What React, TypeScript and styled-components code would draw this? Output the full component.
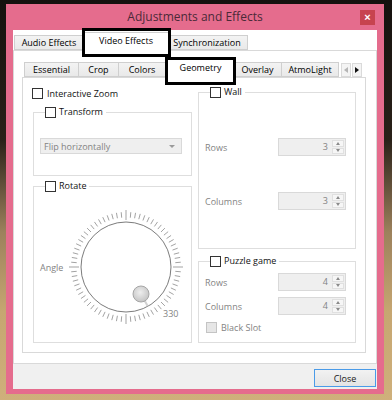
import React from 'react';
import styled, { createGlobalStyle } from 'styled-components';

const uiFont = "'Open Sans', 'Noto Sans', Arial, sans-serif";
const uiSize = '9px';
const disabledText = '#838383';
const lineColor = '#d9d9d9';

const GlobalStyle = createGlobalStyle`
  html, body {
    margin: 0;
    padding: 0;
  }
  body {
    width: 392px;
    height: 400px;
    overflow: hidden;
    background: linear-gradient(180deg, #15110e 0%, #2a2119 35%, #9c815c 58%, #c6a671 78%, #cfb07b 100%);
    font-family: ${uiFont};
  }
`;

const Page = styled.div`
  position: relative;
  width: 392px;
  height: 400px;
  padding: 4px 0 0 6px;
  box-sizing: border-box;
`;

const Window = styled.div`
  width: 378px;
  height: 390px;
  box-sizing: border-box;
  background: #e56c8d;
  padding: 0 7px 5px 7px;
  display: flex;
  flex-direction: column;
`;

const TitleBar = styled.div`
  height: 26px;
  display: grid;
  grid-template-columns: 1fr auto 1fr;
  align-items: center;
`;

const Title = styled.div`
  font-size: 12px;
  color: #4a2a38;
  white-space: nowrap;
  padding-bottom: 2px;
`;

const CloseX = styled.div`
  justify-self: end;
  width: 15px;
  height: 15px;
  margin-right: 2px;
  background: #c7434f;
  color: #fff;
  font-family: 'Liberation Sans', Arial, sans-serif;
  font-size: 11px;
  font-weight: bold;
  line-height: 14px;
  text-align: center;
`;

const Client = styled.div`
  flex: 1;
  background: #fff;
  display: flex;
  flex-direction: column;
`;

const TabBar = styled.div<{ $h: number; $pad: number }>`
  height: ${(p) => p.$h}px;
  padding-left: ${(p) => p.$pad}px;
  display: flex;
  align-items: flex-end;
  position: relative;
  z-index: 1;
`;

const Tab = styled.div<{ $w: number; $active?: boolean }>`
  width: ${(p) => p.$w}px;
  height: ${(p) => (p.$active ? 19 : 15)}px;
  box-sizing: border-box;
  border: 1px solid #cfcfcf;
  border-bottom: ${(p) => (p.$active ? 'none' : '1px solid #cfcfcf')};
  background: ${(p) => (p.$active ? '#fff' : 'linear-gradient(#f3f3f3, #e9e9e9)')};
  margin-bottom: ${(p) => (p.$active ? -1 : 0)}px;
  position: relative;
  z-index: ${(p) => (p.$active ? 2 : 1)};
  display: flex;
  align-items: center;
  justify-content: center;
  padding-bottom: ${(p) => (p.$active ? 3 : 0)}px;
  font-size: ${uiSize};
  color: #000;
  white-space: nowrap;
  & + & {
    margin-left: -1px;
  }
  ${(p) => (p.$active ? '&& { margin-left: -2px; margin-right: -2px; }' : '')}
`;

const ScrollButtons = styled.div`
  display: flex;
  gap: 1px;
  margin-left: 2px;
`;

const ScrollButton = styled.div<{ $dir: 'left' | 'right'; $enabled?: boolean }>`
  width: 10px;
  height: 14px;
  box-sizing: border-box;
  border: 1px solid #dadada;
  background: #f4f4f4;
  display: flex;
  align-items: center;
  justify-content: center;
  &::after {
    content: '';
    width: 0;
    height: 0;
    border-top: 3.5px solid transparent;
    border-bottom: 3.5px solid transparent;
    ${(p) =>
      p.$dir === 'left'
        ? `border-right: 4px solid ${p.$enabled ? '#111' : '#b5b5b5'};`
        : `border-left: 4px solid ${p.$enabled ? '#111' : '#b5b5b5'};`}
  }
`;

const OuterPane = styled.div`
  height: 314px;
  box-sizing: border-box;
  border: 1px solid ${lineColor};
  padding: 8px 10px 10px 8px;
  display: flex;
  flex-direction: column;
`;

const InnerPane = styled.div`
  flex: 1;
  box-sizing: border-box;
  border: 1px solid ${lineColor};
  padding: 8px 9px 9px 9px;
  display: grid;
  grid-template-columns: 160px 159px;
  column-gap: 5px;
`;

const Column = styled.div`
  display: flex;
  flex-direction: column;
`;

const CheckRow = styled.label<{ $indent?: number; $muted?: boolean; $top?: number }>`
  height: 14px;
  display: flex;
  align-items: center;
  gap: 4px;
  margin-left: ${(p) => p.$indent ?? 0}px;
  margin-top: ${(p) => p.$top ?? 0}px;
  font-size: ${uiSize};
  color: ${(p) => (p.$muted ? disabledText : '#111')};
`;

const Check = styled.span<{ $disabled?: boolean }>`
  width: 11px;
  height: 11px;
  box-sizing: border-box;
  border: 1px solid ${(p) => (p.$disabled ? '#c4c4c4' : '#333')};
  background: ${(p) => (p.$disabled ? '#e6e6e6' : '#fff')};
  flex-shrink: 0;
`;

const Group = styled.fieldset<{ $top: number; $pad: string }>`
  margin: ${(p) => p.$top}px 0 0 1px;
  min-width: 0;
  border: 1px solid #dedede;
  padding: ${(p) => p.$pad};
  display: flex;
  flex-direction: column;
`;

const Legend = styled.legend`
  height: 12px;
  margin-left: 5px;
  padding: 0 3px 0 0;
  display: flex;
  align-items: center;
  gap: 3px;
  font-size: ${uiSize};
  color: #111;
  line-height: 12px;
`;

const Combo = styled.div`
  width: 142px;
  height: 16px;
  box-sizing: border-box;
  border: 1px solid ${lineColor};
  background: #efefef;
  display: flex;
  align-items: center;
  justify-content: space-between;
  padding: 0 6px 0 3px;
  font-size: ${uiSize};
  color: ${disabledText};
  &::after {
    content: '';
    border-left: 3px solid transparent;
    border-right: 3px solid transparent;
    border-top: 3px solid #9a9a9a;
  }
`;

const DialRow = styled.div`
  display: flex;
  align-items: center;
`;

const DialLabel = styled.span`
  width: 26px;
  font-size: ${uiSize};
  color: ${disabledText};
`;

const FieldRow = styled.div<{ $gap?: number }>`
  height: 18px;
  display: flex;
  align-items: center;
  justify-content: space-between;
  margin-top: ${(p) => p.$gap ?? 0}px;
  font-size: ${uiSize};
  color: ${disabledText};
`;

const Spin = styled.div`
  width: 68px;
  height: 18px;
  box-sizing: border-box;
  border: 1px solid ${lineColor};
  background: #efefef;
  display: flex;
  align-items: stretch;
`;

const SpinValue = styled.span`
  flex: 1;
  text-align: right;
  padding-right: 4px;
  line-height: 16px;
  font-size: ${uiSize};
  color: ${disabledText};
`;

const SpinArrows = styled.div`
  width: 12px;
  margin: 1px 1px 1px 0;
  display: flex;
  flex-direction: column;
  gap: 1px;
`;

const SpinArrow = styled.div<{ $up?: boolean }>`
  flex: 1;
  background: #f6f6f6;
  border: 1px solid #e0e0e0;
  display: flex;
  align-items: center;
  justify-content: center;
  &::after {
    content: '';
    border-left: 2.5px solid transparent;
    border-right: 2.5px solid transparent;
    ${(p) => (p.$up ? 'border-bottom: 3px solid #8a8a8a;' : 'border-top: 3px solid #8a8a8a;')}
  }
`;

const ButtonStrip = styled.div`
  flex: 1;
  background: #f0f0f0;
  display: flex;
  justify-content: flex-end;
  align-items: flex-start;
  padding: 5px 1px 0 0;
`;

const Button = styled.div`
  width: 62px;
  height: 18px;
  box-sizing: border-box;
  border: 1px solid #4a9be8;
  background: linear-gradient(#f2f2f2, #e4e4e4);
  display: flex;
  align-items: center;
  justify-content: center;
  font-size: ${uiSize};
  color: #1a1a1a;
`;

const Highlight = styled.div<{ $x: number; $y: number; $w: number; $h: number }>`
  position: absolute;
  left: ${(p) => p.$x}px;
  top: ${(p) => p.$y}px;
  width: ${(p) => p.$w}px;
  height: ${(p) => p.$h}px;
  box-sizing: border-box;
  border: 3px solid #000;
  pointer-events: none;
  z-index: 5;
`;

const outerTabs = [
  { label: 'Audio Effects', w: 70 },
  { label: 'Video Effects', w: 86, active: true },
  { label: 'Synchronization', w: 82 },
];

const innerTabs = [
  { label: 'Essential', w: 55 },
  { label: 'Crop', w: 41 },
  { label: 'Colors', w: 48 },
  { label: 'Geometry', w: 71, active: true },
  { label: 'Overlay', w: 49 },
  { label: 'AtmoLight', w: 58 },
];

const Dial: React.FC = () => {
  const c = 60;
  const ticks = Array.from({ length: 72 }, (_, i) => i * 5);
  const knobDir = { x: 0.486, y: 0.874 };
  return (
    <svg width="120" height="120" viewBox="0 0 120 120">
      {ticks.map((deg) => {
        const a = (deg * Math.PI) / 180;
        const major = deg % 90 === 0;
        const r1 = major ? 47 : 49.5;
        const r2 = major ? 57 : 55;
        return (
          <line
            key={deg}
            x1={c + Math.sin(a) * r1}
            y1={c - Math.cos(a) * r1}
            x2={c + Math.sin(a) * r2}
            y2={c - Math.cos(a) * r2}
            stroke="#a3a3a3"
            strokeWidth="1"
          />
        );
      })}
      <circle cx={c} cy={c} r="45" fill="#fff" stroke="#7c7c7c" strokeWidth="1" />
      <line
        x1={c + knobDir.x * 38}
        y1={c + knobDir.y * 38}
        x2={c + knobDir.x * 44.5}
        y2={c + knobDir.y * 44.5}
        stroke="#d2d2d2"
        strokeWidth="2"
      />
      <defs>
        <radialGradient id="knob" cx="45%" cy="40%" r="60%">
          <stop offset="0%" stopColor="#eeeeee" />
          <stop offset="100%" stopColor="#c4c4c4" />
        </radialGradient>
      </defs>
      <circle cx={c + 15} cy={c + 27} r="8" fill="url(#knob)" stroke="#a6a6a6" strokeWidth="1" />
      <text x="97" y="109.5" fontSize="9" fill={disabledText} fontFamily={uiFont}>
        330
      </text>
    </svg>
  );
};

const SpinBox: React.FC<{ value: number }> = ({ value }) => (
  <Spin>
    <SpinValue>{value}</SpinValue>
    <SpinArrows>
      <SpinArrow $up />
      <SpinArrow />
    </SpinArrows>
  </Spin>
);

const App: React.FC = () => {
  return (
    <Page>
      <GlobalStyle />
      <Window>
        <TitleBar>
          <div />
          <Title>Adjustments and Effects</Title>
          <CloseX>×</CloseX>
        </TitleBar>
        <Client>
          <TabBar $h={20} $pad={1}>
            {outerTabs.map((t) => (
              <Tab key={t.label} $w={t.w} $active={t.active}>
                {t.label}
              </Tab>
            ))}
          </TabBar>
          <OuterPane>
            <TabBar $h={18} $pad={2}>
              {innerTabs.map((t) => (
                <Tab key={t.label} $w={t.w} $active={t.active}>
                  {t.label}
                </Tab>
              ))}
              <ScrollButtons>
                <ScrollButton $dir="left" />
                <ScrollButton $dir="right" $enabled />
              </ScrollButtons>
            </TabBar>
            <InnerPane>
              <Column>
                <CheckRow>
                  <Check />
                  Interactive Zoom
                </CheckRow>
                <Group $top={6} $pad="20px 9px 21px 6px">
                  <Legend>
                    <Check />
                    Transform
                  </Legend>
                  <Combo>Flip horizontally</Combo>
                </Group>
                <Group $top={4} $pad="15px 4px 15px 6px">
                  <Legend>
                    <Check />
                    Rotate
                  </Legend>
                  <DialRow>
                    <DialLabel>Angle</DialLabel>
                    <Dial />
                  </DialRow>
                </Group>
              </Column>
              <Column>
                <Group $top={0} $pad="40px 9px 38px 6px">
                  <Legend>
                    <Check />
                    Wall
                  </Legend>
                  <FieldRow>
                    Rows
                    <SpinBox value={3} />
                  </FieldRow>
                  <FieldRow $gap={36}>
                    Columns
                    <SpinBox value={3} />
                  </FieldRow>
                </Group>
                <Group $top={6} $pad="6px 9px 8px 6px">
                  <Legend>
                    <Check />
                    Puzzle game
                  </Legend>
                  <FieldRow>
                    Rows
                    <SpinBox value={4} />
                  </FieldRow>
                  <FieldRow $gap={6}>
                    Columns
                    <SpinBox value={4} />
                  </FieldRow>
                  <CheckRow $indent={1} $muted $top={5}>
                    <Check $disabled />
                    Black Slot
                  </CheckRow>
                </Group>
              </Column>
            </InnerPane>
          </OuterPane>
          <ButtonStrip>
            <Button>Close</Button>
          </ButtonStrip>
        </Client>
      </Window>
      <Highlight $x={82} $y={28} $w={89} $h={29} />
      <Highlight $x={165} $y={57} $w={71} $h={28} />
    </Page>
  );
};

export default App;
